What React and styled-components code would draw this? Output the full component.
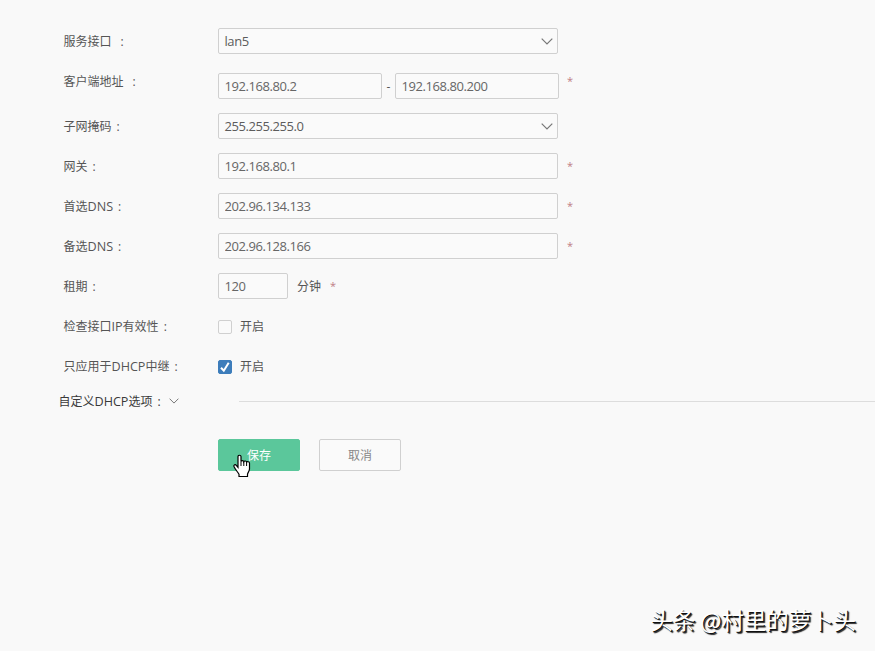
import React from "react";
import styled, { createGlobalStyle } from "styled-components";

const GlobalStyle = createGlobalStyle`
	* {
		box-sizing: border-box;
	}
	body {
		margin: 0;
		background: #f9f9f9;
		color: #555;
		font-family: "Open Sans", "Noto Sans CJK SC", sans-serif;
		font-size: 12px;
		overflow: hidden;
	}
`;

const Page = styled.main`
	position: relative;
	width: 875px;
	height: 651px;
	padding: 28px 0 0 63px;
	background: #f9f9f9;
	overflow: hidden;
`;

const Form = styled.form`
	display: flex;
	flex-direction: column;
	gap: 14px;
`;

const Row = styled.div`
	display: flex;
	align-items: center;
	height: 26px;
	margin-top: ${({ $offset }) => $offset || 0}px;
`;

const LabelBox = styled.label`
	display: flex;
	align-items: center;
	align-self: ${({ $raised }) => ($raised ? "flex-start" : "center")};
	width: 155px;
	height: ${({ $raised }) => ($raised ? 17 : 26)}px;
	padding-left: 0.5px;
	line-height: 17px;
	white-space: nowrap;
`;

const Latin = styled.span`
	font-size: 12.6px;
`;

const Colon = styled.span`
	margin-left: ${({ $wide }) => ($wide ? 9 : 5)}px;
`;

const TextInput = styled.input`
	width: ${({ $width }) => $width || 340}px;
	height: 26px;
	padding: 0 5.5px;
	border: 1px solid #d0d0d0;
	border-radius: 2px;
	outline: none;
	background: #fafafa;
	color: #666;
	font-family: inherit;
	font-size: 13px;
	letter-spacing: -0.42px;
`;

const SelectBox = styled.div`
	display: flex;
	align-items: center;
	justify-content: space-between;
	width: 340px;
	height: 26px;
	padding: 0 4px 0 5.5px;
	border: 1px solid #d0d0d0;
	border-radius: 2px;
	background: #fafafa;
	color: #5c5c5c;
	font-size: 13px;
	letter-spacing: -0.42px;
`;

const Dash = styled.span`
	width: 13px;
	text-align: center;
`;

const Required = styled.span`
	margin-left: ${({ $raised }) => ($raised ? 8 : 9)}px;
	align-self: ${({ $raised }) => ($raised ? "flex-start" : "center")};
	height: 17px;
	line-height: ${({ $raised }) => ($raised ? 16 : 16)}px;
	color: #c07d86;
	font-size: 11px;
`;

const Unit = styled.span`
	margin-left: 9px;
`;

const CheckLabel = styled.label`
	display: flex;
	align-items: center;
	gap: 8px;
`;

const Box = styled.span`
	display: flex;
	align-items: center;
	justify-content: center;
	width: 14px;
	height: 14px;
	margin-top: 1px;
	border: 1px solid ${({ $checked }) => ($checked ? "#3d7dbb" : "#d0d0d0")};
	border-radius: 2px;
	background: ${({ $checked }) => ($checked ? "#3d7dbb" : "#fafafa")};
`;

const Section = styled.div`
	display: flex;
	align-items: center;
	height: 26px;
	margin: -5px 0 0 -4.5px;
	color: #3a3a3a;
`;

const SectionTitle = styled.span`
	display: flex;
	align-items: center;
	width: 180px;
`;

const Divider = styled.hr`
	flex: 1;
	margin: 0;
	border: 0;
	border-top: 1px solid #ddd;
`;

const SectionArrow = styled.span`
	display: flex;
	margin-left: 8px;
`;

const Actions = styled.div`
	display: flex;
	gap: 19px;
	margin: 11px 0 0 155px;
`;

const Button = styled.button`
	width: 82px;
	height: 32px;
	padding: 0;
	border: 1px solid ${({ $primary }) => ($primary ? "#5bc79b" : "#d0d0d0")};
	border-radius: 2px;
	background: ${({ $primary }) => ($primary ? "#5bc79b" : "#fafafa")};
	color: ${({ $primary }) => ($primary ? "#fff" : "#888")};
	font-family: inherit;
	font-size: 12px;
`;

const Pointer = styled.svg`
	position: absolute;
	left: 233px;
	top: 454px;
`;

const Watermark = styled.div`
	position: absolute;
	left: 650.5px;
	top: 602px;
	color: #fff;
	font-family: "Noto Sans CJK SC", sans-serif;
	font-size: 22.4px;
	line-height: 34px;
	white-space: nowrap;
	text-shadow: 1px 1px 0 #111, 2px 2px 1px #222;
`;

function Chevron({ width = 12, color = "#777" }) {
	return (
		<svg width={width} height={width / 2 + 1} viewBox="0 0 12 7" fill="none" stroke={color} strokeWidth="1.2">
			<path d="M0.7 0.7 6 6 11.3 0.7" />
		</svg>
	);
}

function Label({ children, wide, raised }) {
	return (
		<LabelBox $raised={raised}>
			{children}
			<Colon $wide={wide}>:</Colon>
		</LabelBox>
	);
}

function Checkbox({ checked }) {
	return (
		<CheckLabel>
			<Box $checked={checked}>
				{checked && (
					<svg width="12" height="12" viewBox="0 0 12 12" fill="none" stroke="#fff" strokeWidth="2">
						<path d="M2 6.7 4.8 9.7 9.7 1.7" />
					</svg>
				)}
			</Box>
			开启
		</CheckLabel>
	);
}

const addressRows = [
	{ label: "网关", value: "192.168.80.1" },
	{ label: "首选", suffix: "DNS", value: "202.96.134.133" },
	{ label: "备选", suffix: "DNS", value: "202.96.128.166" },
];

export default function App() {
	return (
		<>
			<GlobalStyle />
			<Page>
				<Form>
					<Row>
						<Label wide>服务接口</Label>
						<SelectBox>
							lan5
							<Chevron />
						</SelectBox>
					</Row>
					<Row $offset={5}>
						<Label wide raised>客户端地址</Label>
						<TextInput $width={164} defaultValue="192.168.80.2" />
						<Dash>-</Dash>
						<TextInput $width={164} defaultValue="192.168.80.200" />
						<Required $raised>*</Required>
					</Row>
					<Row>
						<Label>子网掩码</Label>
						<SelectBox>
							255.255.255.0
							<Chevron />
						</SelectBox>
					</Row>
					{addressRows.map(({ label, suffix, value }) => (
						<Row key={label}>
							<Label>
								{label}
								{suffix && <Latin>{suffix}</Latin>}
							</Label>
							<TextInput defaultValue={value} />
							<Required>*</Required>
						</Row>
					))}
					<Row>
						<Label>租期</Label>
						<TextInput $width={70} defaultValue="120" />
						<Unit>分钟</Unit>
						<Required>*</Required>
					</Row>
					<Row>
						<Label>检查接口<Latin>IP</Latin>有效性</Label>
						<Checkbox />
					</Row>
					<Row>
						<Label>只应用于<Latin>DHCP</Latin>中继</Label>
						<Checkbox checked />
					</Row>
					<Section>
						<SectionTitle>
							自定义<Latin>DHCP</Latin>选项
							<Colon>:</Colon>
							<SectionArrow>
								<Chevron width={10} />
							</SectionArrow>
						</SectionTitle>
						<Divider />
					</Section>
					<Actions>
						<Button type="button" $primary>保存</Button>
						<Button type="button">取消</Button>
					</Actions>
				</Form>
				<Pointer width="18" height="24" viewBox="0 0 18 24">
					<path
						d="M5 2.5C5 .8 8 .8 8 2.5V7.5c.3-1.3 2.6-1.2 2.8.2.5-1.1 2.6-.9 2.8.5.7-.9 2.9-.6 2.9 1V15c0 2.5-2 3.6-2 5.5V22.5H6v-2.3C4.5 17.7 2 15 1 12.5c-.5-1.7 1.3-2.4 2.3-1.2L5 13.3z"
						fill="#fff"
						stroke="#000"
						strokeWidth="1.2"
					/>
					<path d="M8 7.5v4.5M10.8 8V12M13.6 8.5v3.5" fill="none" stroke="#000" />
				</Pointer>
				<Watermark>头条 @村里的萝卜头</Watermark>
			</Page>
		</>
	);
}
